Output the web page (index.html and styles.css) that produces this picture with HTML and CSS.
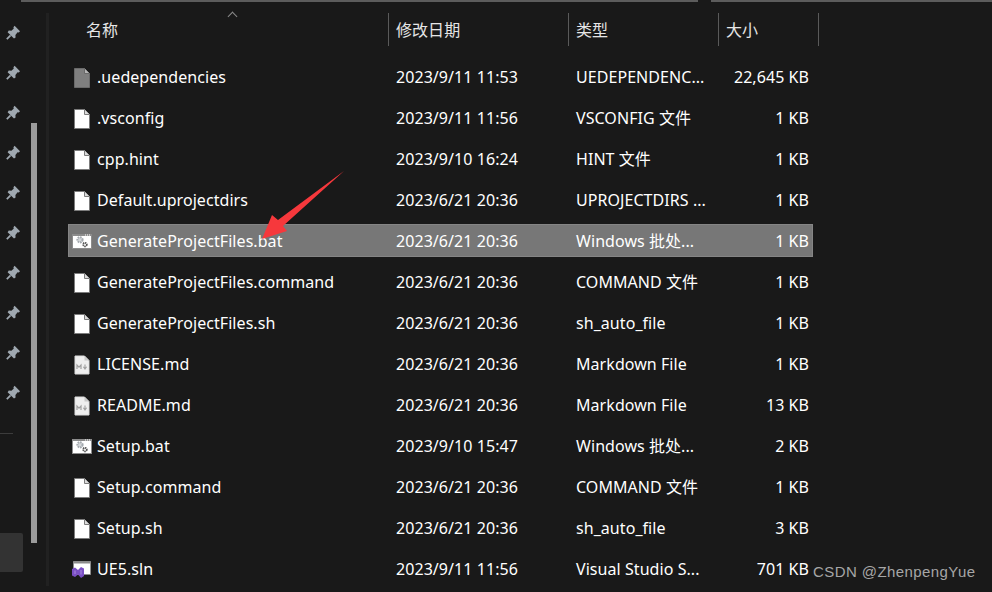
FILE: index.html
```html
<!DOCTYPE html>
<html lang="zh-CN">
<head>
    <meta charset="UTF-8">
    <title>UE5</title>
    <link rel="stylesheet" href="styles.css">
</head>
<body>
    <svg class="icon-defs" width="0" height="0">
        <symbol id="pin" viewBox="0 0 16 16">
            <path d="M9.6 .8 15 6.2 13.8 7.6 12.6 7.2 10.4 10 10.6 12.4 9 13.6 2.6 7.2 3.8 5.6 6.4 5.8 8.8 3.4 8.4 2.2Z" fill="#9fa8b0"/>
            <path d="M5.6 10.4 1.8 14.2" stroke="#9fa8b0" stroke-width="1.8"/>
        </symbol>
        <symbol id="doc" viewBox="0 0 16 20">
            <path d="M.5.5H10.5L15.5 5.5V19.5H.5Z" fill="#fff" stroke="#7c7c7c"/>
            <path d="M10.5.5V5.5H15.5" fill="#dcdcdc" stroke="#7c7c7c"/>
        </symbol>
        <symbol id="doc-gray" viewBox="0 0 16 20">
            <path d="M.5.5H10.5L15.5 5.5V19.5H.5Z" fill="#7f7f7f" stroke="#6a6a6a"/>
            <path d="M10.5.5V5.5H15.5" fill="#b5b5b5" stroke="#6a6a6a"/>
        </symbol>
        <symbol id="md" viewBox="0 0 16 20">
            <path d="M1 1H10.5L15 5.5V19H1Z" fill="#eeeeee" stroke="#dcdcdc"/>
            <path d="M10.5 1V5.5H15" fill="#c8c8c8"/>
            <path d="M3 14V10L5 12.2 7 10V14" fill="none" stroke="#a0a0a0" stroke-width="1.2"/>
            <path d="M11 9.5V13M9.4 11.8 11 14 12.6 11.8" fill="none" stroke="#a0a0a0" stroke-width="1.1"/>
        </symbol>
        <symbol id="bat" viewBox="0 0 20 15">
            <path d="M0 0H20V15H0Z" fill="#8c8c8c"/>
            <path d="M1 2H19V14H1Z" fill="#ffffff"/>
            <path d="M13 1H19" stroke="#ffffff" stroke-dasharray="1 1"/>
            <circle cx="8" cy="5.8" r="2.6" fill="#d4d7da" stroke="#a4a9ae" stroke-width="2" stroke-dasharray="1.6 .8"/>
            <circle cx="13" cy="10.6" r="1.8" fill="#ffffff" stroke="#555555" stroke-width="1.8" stroke-dasharray="1.3 .6"/>
        </symbol>
        <symbol id="sln" viewBox="0 0 20 18">
            <path d="M1.5 .5H18.5V13.5H1.5Z" fill="#ffffff" stroke="#8c8c8c"/>
            <path d="M2 1H18V2.5H2Z" fill="#8c8c8c"/>
            <path d="M0 8 3 6.5 6 9 9 6 12 7.5V15L9 17 6 13.5 3 16 0 14.5Z" fill="#7a4fc4"/>
            <path d="M3 9.5V13M9 9V13.5" stroke="#a98ce0" stroke-width="1"/>
        </symbol>
    </svg>

    <div class="sidebar">
        <div class="pins">
            <svg class="pin"><use href="#pin"/></svg>
            <svg class="pin"><use href="#pin"/></svg>
            <svg class="pin"><use href="#pin"/></svg>
            <svg class="pin"><use href="#pin"/></svg>
            <svg class="pin"><use href="#pin"/></svg>
            <svg class="pin"><use href="#pin"/></svg>
            <svg class="pin"><use href="#pin"/></svg>
            <svg class="pin"><use href="#pin"/></svg>
            <svg class="pin"><use href="#pin"/></svg>
            <svg class="pin"><use href="#pin"/></svg>
            <div class="side-line"></div>
            <div class="side-active"></div>
        </div>
        <div class="scroll-track"><div class="scroll-thumb"></div></div>
    </div>

    <div class="main">
        <div class="top-boxes">
            <div class="top-box address"></div>
            <div class="top-box search"></div>
        </div>

        <div class="head-row">
            <div class="head-cell name-head">名称<span class="sort-caret"></span></div>
            <div class="head-cell">修改日期</div>
            <div class="head-cell">类型</div>
            <div class="head-cell">大小</div>
        </div>

        <div class="file-list">
            <div class="file-row"><div class="name"><span class="icon-slot"><svg class="ic-doc"><use href="#doc-gray"/></svg></span><span class="label">.uedependencies</span></div><div>2023/9/11 11:53</div><div>UEDEPENDENC...</div><div class="size">22,645 KB</div></div>
            <div class="file-row"><div class="name"><span class="icon-slot"><svg class="ic-doc"><use href="#doc"/></svg></span><span class="label">.vsconfig</span></div><div>2023/9/11 11:56</div><div>VSCONFIG 文件</div><div class="size">1 KB</div></div>
            <div class="file-row"><div class="name"><span class="icon-slot"><svg class="ic-doc"><use href="#doc"/></svg></span><span class="label">cpp.hint</span></div><div>2023/9/10 16:24</div><div>HINT 文件</div><div class="size">1 KB</div></div>
            <div class="file-row"><div class="name"><span class="icon-slot"><svg class="ic-doc"><use href="#doc"/></svg></span><span class="label">Default.uprojectdirs</span></div><div>2023/6/21 20:36</div><div>UPROJECTDIRS ...</div><div class="size">1 KB</div></div>
            <div class="file-row selected"><div class="name"><span class="icon-slot"><svg class="ic-bat"><use href="#bat"/></svg></span><span class="label">GenerateProjectFiles.bat</span></div><div>2023/6/21 20:36</div><div>Windows 批处...</div><div class="size">1 KB</div></div>
            <div class="file-row"><div class="name"><span class="icon-slot"><svg class="ic-doc"><use href="#doc"/></svg></span><span class="label">GenerateProjectFiles.command</span></div><div>2023/6/21 20:36</div><div>COMMAND 文件</div><div class="size">1 KB</div></div>
            <div class="file-row"><div class="name"><span class="icon-slot"><svg class="ic-doc"><use href="#doc"/></svg></span><span class="label">GenerateProjectFiles.sh</span></div><div>2023/6/21 20:36</div><div>sh_auto_file</div><div class="size">1 KB</div></div>
            <div class="file-row"><div class="name"><span class="icon-slot"><svg class="ic-md"><use href="#md"/></svg></span><span class="label">LICENSE.md</span></div><div>2023/6/21 20:36</div><div>Markdown File</div><div class="size">1 KB</div></div>
            <div class="file-row"><div class="name"><span class="icon-slot"><svg class="ic-md"><use href="#md"/></svg></span><span class="label">README.md</span></div><div>2023/6/21 20:36</div><div>Markdown File</div><div class="size">13 KB</div></div>
            <div class="file-row"><div class="name"><span class="icon-slot"><svg class="ic-bat"><use href="#bat"/></svg></span><span class="label">Setup.bat</span></div><div>2023/9/10 15:47</div><div>Windows 批处...</div><div class="size">2 KB</div></div>
            <div class="file-row"><div class="name"><span class="icon-slot"><svg class="ic-doc"><use href="#doc"/></svg></span><span class="label">Setup.command</span></div><div>2023/6/21 20:36</div><div>COMMAND 文件</div><div class="size">1 KB</div></div>
            <div class="file-row"><div class="name"><span class="icon-slot"><svg class="ic-doc"><use href="#doc"/></svg></span><span class="label">Setup.sh</span></div><div>2023/6/21 20:36</div><div>sh_auto_file</div><div class="size">3 KB</div></div>
            <div class="file-row"><div class="name"><span class="icon-slot"><svg class="ic-sln"><use href="#sln"/></svg></span><span class="label">UE5.sln</span></div><div>2023/9/11 11:56</div><div>Visual Studio S...</div><div class="size">701 KB</div></div>
        </div>
    </div>

    <!-- red arrow annotation -->
    <svg class="arrow" width="992" height="592">
        <polygon points="262,239 272,215 278,220 344,171 283,226 287,231" fill="#f6383c"/>
    </svg>

    <div class="watermark">CSDN @ZhenpengYue</div>
</body>
</html>
```

FILE: styles.css
```css
body {
    font-family: "Noto Sans", "Noto Sans CJK SC", sans-serif;
    font-size: 16px;
    letter-spacing: 0.06px;
    color: #fff;
    margin: 0;
    height: 592px;
    display: flex;
    overflow: hidden;
    background-color: #191919;
}

.icon-defs {
    display: block;
    width: 0;
}

.sidebar {
    width: 46px;
    flex-shrink: 0;
    display: flex;
}

.pins {
    width: 31px;
    padding-top: 25px;
    display: flex;
    flex-direction: column;
}

.pin {
    width: 16px;
    height: 16px;
    margin: 0 0 24px 5px;
    flex-shrink: 0;
}

.side-line {
    width: 13px;
    height: 1px;
    margin-top: 8px;
    background-color: #3c3c3c;
}

.side-active {
    width: 23px;
    height: 39px;
    margin-top: 99px;
    border-radius: 0 2px 2px 0;
    background-color: #333;
}

.scroll-track {
    width: 15px;
    padding-top: 123px;
}

.scroll-thumb {
    width: 6px;
    height: 420px;
    background-color: #9b9b9b;
}

.main {
    flex: 1;
    min-width: 0;
    height: 573px;
    margin-top: 13px;
    border-left: 3px solid #212121;
    position: relative;
}

.top-boxes {
    display: flex;
    position: absolute;
    top: -13px;
    left: -28px;
    right: 0;
    gap: 13px;
}

.top-box {
    height: 2px;
    background-color: #5c5c5c;
}

.address {
    width: 677px;
}

.search {
    flex: 1;
}

.head-row {
    display: flex;
    height: 33px;
    margin-left: 19px;
    color: #e6e6e6;
}

.head-cell {
    padding-left: 7px;
    line-height: 34px;
    border-right: 1px solid #5a5a5a;
    box-sizing: border-box;
}

.head-cell:nth-child(1) {
    width: 321px;
    padding-left: 18px;
    position: relative;
}

.head-cell:nth-child(2) {
    width: 180px;
}

.head-cell:nth-child(3) {
    width: 150px;
}

.head-cell:nth-child(4) {
    width: 100px;
}

.sort-caret {
    position: absolute;
    left: 161px;
    top: 0;
    width: 6px;
    height: 6px;
    border-left: 1px solid #8a8a8a;
    border-top: 1px solid #8a8a8a;
    transform: rotate(45deg);
}

.file-list {
    display: flex;
    flex-direction: column;
    gap: 8px;
    margin-top: 14px;
    margin-left: 19px;
    width: 745px;
}

.file-row {
    display: grid;
    grid-template-columns: 328px 180px 145px 88px;
    height: 33px;
    line-height: 35px;
    flex-shrink: 0;
    box-sizing: border-box;
}

.file-row.selected {
    background-color: #777;
    outline: 1px solid #858585;
    outline-offset: -1px;
}

.name {
    display: flex;
    align-items: center;
}

.icon-slot {
    width: 28px;
    margin-right: 1px;
    flex-shrink: 0;
    display: flex;
    justify-content: center;
}

.label {
    line-height: 35px;
}

.ic-doc {
    width: 16px;
    height: 20px;
}

.ic-md {
    width: 16px;
    height: 20px;
}

.ic-bat {
    width: 20px;
    height: 15px;
}

.ic-sln {
    width: 20px;
    height: 18px;
}

.size {
    text-align: right;
}

.arrow {
    position: absolute;
    top: 0;
    left: 0;
    pointer-events: none;
}

.watermark {
    position: absolute;
    left: 813px;
    top: 563px;
    font-family: "Liberation Sans", sans-serif;
    font-size: 15px;
    letter-spacing: 0.42px;
    color: #a6a6a6;
}
```
